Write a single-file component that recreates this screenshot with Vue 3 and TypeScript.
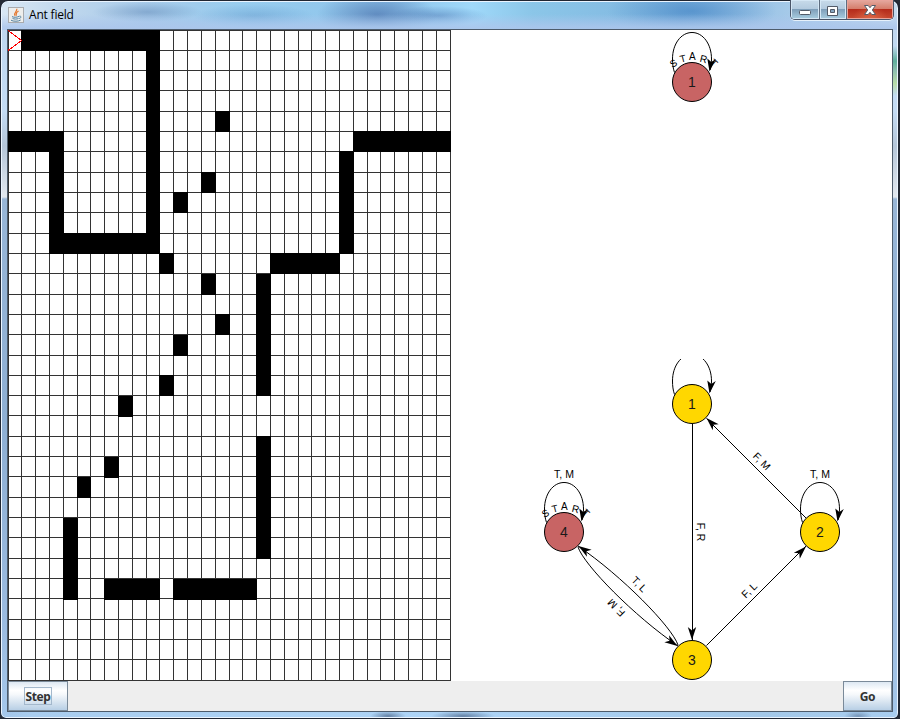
<script setup lang="ts">
interface Run { row: number; col: number; rows: number; cols: number }
interface GraphNode { id: string; x: number; y: number; start: boolean }
interface Label { text: string; x: number; y: number; angle: number }

const count = 32
const stepX = 442 / count
const stepY = 650 / count
const lineIndexes = Array.from({ length: count + 1 }, (_, i) => i)
const lineX = (i: number) => Math.floor(i * stepX)
const lineY = (i: number) => Math.floor(i * stepY)
const cellY = (i: number) => lineY(i) + (i >= 12 && (i * stepY) % 1 >= 0.4 ? 1 : 0)

const run = (row: number, col: number, rows = 1, cols = 1): Run => ({ row, col, rows, cols })
const food: Run[] = [
  run(0, 1, 1, 10), run(0, 10, 11, 1), run(10, 3, 1, 8), run(5, 0, 1, 4), run(5, 3, 6, 1),
  run(5, 25, 1, 7), run(6, 24, 5, 1), run(11, 19, 1, 5), run(12, 18, 6, 1), run(20, 18, 6, 1),
  run(27, 12, 1, 6), run(27, 7, 1, 4), run(24, 4, 4, 1),
  run(4, 15), run(7, 14), run(8, 12), run(11, 11), run(12, 14), run(14, 15),
  run(15, 12), run(17, 11), run(18, 8), run(21, 7), run(22, 5),
]
const cells = food.map((r) => ({
  x: lineX(r.col),
  y: cellY(r.row),
  w: lineX(r.col + r.cols) - lineX(r.col) + 1,
  h: cellY(r.row + r.rows - 1) + 21 - cellY(r.row),
}))

const nodes: GraphNode[] = [
  { id: '1', x: 692, y: 404, start: false },
  { id: '2', x: 820, y: 532, start: false },
  { id: '3', x: 692, y: 660, start: false },
  { id: '4', x: 564, y: 532, start: true },
]
const current: GraphNode = { id: '1', x: 692, y: 82, start: true }
const allNodes = [current, ...nodes]
const looped = allNodes.filter((n) => n.id !== '3')

const startLetters: Label[] = [
  { text: 'S', x: -18.7, y: -18.9, angle: -30 },
  { text: 'T', x: -9.3, y: -23.5, angle: -14 },
  { text: 'A', x: 0.4, y: -25.4, angle: 0 },
  { text: 'R', x: 11.6, y: -23.2, angle: 14 },
  { text: 'T', x: 22, y: -19.2, angle: 42 },
]
const labels: Label[] = [
  { text: 'T, M', x: 564, y: 474, angle: 0 },
  { text: 'T, M', x: 820, y: 474, angle: 0 },
  { text: 'F, M', x: 762, y: 461, angle: 45 },
  { text: 'F, R', x: 701, y: 532, angle: 90 },
  { text: 'F, L', x: 749, y: 590, angle: -45 },
  { text: 'T, L', x: 639.5, y: 584, angle: 45 },
  { text: 'F, M', x: 616, y: 608, angle: -135 },
]
const edges = [
  'M692.5 424V640',
  'M806 518L706.5 418.5',
  'M706.5 645.5L806 546',
  'M578 547C584 565 634 616 678 646',
  'M678 645C672 627 622 576 578 546',
]
const arrows = [
  { x: 692, y: 640, angle: 90 },
  { x: 706.5, y: 418, angle: -135 },
  { x: 806, y: 546.5, angle: -45 },
  { x: 677.5, y: 646, angle: 34 },
  { x: 578.5, y: 546, angle: -146 },
]
</script>

<template>
  <div class="window">
    <header class="title-bar">
      <div class="glass"></div>
      <svg class="app-icon" width="16" height="16" viewBox="0 0 16 16">
        <rect x=".5" y=".5" width="15" height="15" fill="#eeeeec" stroke="#a9abae" />
        <path d="M8.700 1.800C10 4 5.200 5.500 6.900 8.800M10.600 4C7.200 5.500 8.800 6.600 8 8.800" fill="none" stroke="#e5782e" stroke-width="1.200" />
        <path d="M4 9.500C5 10.500 9 10.500 11 9.400M4.500 11.300C6 12.400 9 12.200 10.500 11.500M3 13.200C5 14.700 11 14.500 12.700 13M11.300 9.200C14 8.800 13 11.300 11.200 11.500" fill="none" stroke="#5382a1" />
      </svg>
      <h1 class="title">Ant field</h1>
      <div class="controls">
        <button class="control minimize" aria-label="Minimize">
          <svg width="14" height="10" viewBox="0 0 14 10"><rect x="1.500" y="4.500" width="11" height="4" rx="1" fill="#fff" stroke="#535b68" /></svg>
        </button>
        <button class="control maximize" aria-label="Maximize">
          <svg width="14" height="10" viewBox="0 0 14 10"><path fill-rule="evenodd" d="M1.500.5h10v9h-10zM4.500 3.500h4v3h-4z" fill="#fff" stroke="#535b68" /></svg>
        </button>
        <button class="control close" aria-label="Close">
          <svg width="14" height="11" viewBox="0 0 14 11"><path d="M1.500.5h3.700L7 2.700 8.800.5h3.700L9.300 5l3.200 4.500H8.800L7 7.300 5.200 9.500H1.500L4.700 5z" fill="#fff" stroke="#535b68" /></svg>
        </button>
      </div>
    </header>

    <main class="content">
      <div class="panels">
        <svg class="field" width="443" height="651" viewBox="0 0 443 651" shape-rendering="crispEdges">
          <rect v-for="i in lineIndexes" :key="'v' + i" :x="lineX(i)" y="0" width="1" height="651" fill="#333" />
          <rect v-for="i in lineIndexes" :key="'h' + i" x="0" :y="lineY(i)" width="443" height="1" fill="#333" />
          <rect v-for="(c, i) in cells" :key="'c' + i" :x="c.x" :y="c.y" :width="c.w" :height="c.h" />
          <path d="M0 .5L13.500 10.500L0 20.500" fill="none" stroke="#f00" />
        </svg>
        <svg class="graph" width="441" height="651" viewBox="451 30 441 651">
          <defs>
            <clipPath id="machine"><rect x="451" y="359" width="441" height="322" /></clipPath>
          </defs>
          <g v-for="(n, i) in looped" :key="'l' + i" :clip-path="n.y > 359 ? 'url(#machine)' : undefined">
            <g :transform="`translate(${n.x} ${n.y})`">
              <path class="edge" d="M-17.500-9.500C-19-14-19.500-18-19.500-23C-19.500-38-11-49.500 0-49.500S19.500-38 19.500-23C19.500-19 19-16 18-12" />
              <path d="M17.500-10.500L15.300-23.500L19.300-20L23.800-23Z" />
            </g>
          </g>
          <path v-for="(d, i) in edges" :key="'e' + i" class="edge" :d="d" />
          <path v-for="(a, i) in arrows" :key="'a' + i" d="M0 0L-13-4.200L-9.500 0L-13 4.200Z" :transform="`translate(${a.x} ${a.y}) rotate(${a.angle})`" />
          <g v-for="(n, i) in allNodes" :key="'n' + i" :transform="`translate(${n.x} ${n.y})`">
            <circle r="19.500" class="node" :class="{ start: n.start }" />
            <text class="node-id" y="5">{{ n.id }}</text>
            <template v-if="n.start">
              <text v-for="(s, k) in startLetters" :key="k" class="label arc" :transform="`translate(${s.x} ${s.y}) rotate(${s.angle})`" y="3.700">{{ s.text }}</text>
            </template>
          </g>
          <text v-for="(l, i) in labels" :key="'t' + i" class="label" :transform="`translate(${l.x} ${l.y}) rotate(${l.angle})`" y="4">{{ l.text }}</text>
        </svg>
      </div>
      <footer class="toolbar">
        <button class="action step"><span class="focus">Step</span></button>
        <button class="action go">Go</button>
      </footer>
    </main>
  </div>
</template>

<style>
body {
  margin: 0;
  background: #252b36;
  overflow: hidden;
}
</style>

<style scoped>
.window {
  box-sizing: border-box;
  width: 900px;
  height: 719px;
  padding: 0 5px 5px;
  border: 2px solid #202632;
  border-width: 1px 2px 1px 1px;
  border-radius: 8px 8px 6px 6px;
  box-shadow: inset 0 0 0 1px #eaf4ff;
  background:
    linear-gradient(transparent, #5eae9c 30%, #8fc0b0 50%, #b8dca8 75%, transparent) right 1px top 45px / 5px 50px no-repeat,
    radial-gradient(ellipse 18px 5px at 387px 5px, rgba(70, 95, 130, .7), transparent) left bottom / 100% 7px no-repeat,
    radial-gradient(ellipse 32px 5px at 462px 5px, rgba(70, 95, 130, .7), transparent) left bottom / 100% 7px no-repeat,
    radial-gradient(ellipse 14px 5px at 857px 5px, rgba(70, 95, 130, .5), transparent) left bottom / 100% 7px no-repeat,
    linear-gradient(90deg, transparent 10px, #a9cdef 30px, #add4f7 50%, #a3c8e9 85%, #a9cef0) left bottom / 100% 7px no-repeat,
    linear-gradient(#bed5ed 0, #c4dcf5 110px, #b5c6d9 145px, #e2e8ef 196px, #98b6d7 198px, #8eafd3 420px, #9bbbe0 620px, #a5c8eb);
}
.title-bar {
  position: relative;
  display: flex;
  align-items: flex-start;
  height: 28px;
  padding-left: 2px;
}
.glass {
  position: absolute;
  inset: 1px -4px -1px -4px;
  border-radius: 6px 6px 0 0;
  background:
    linear-gradient(transparent 12px, rgba(172, 198, 236, .85) 25px),
    radial-gradient(ellipse 55px 10px at 145px 10px, rgba(80, 120, 170, .4), transparent),
    radial-gradient(ellipse 60px 12px at 252px 14px, rgba(67, 120, 180, .3), transparent),
    radial-gradient(ellipse 60px 24px at 375px 13px, rgba(57, 92, 156, .55), transparent),
    radial-gradient(ellipse 50px 10px at 436px 14px, rgba(64, 106, 169, .45), transparent),
    radial-gradient(ellipse 85px 24px at 690px 9px, rgba(48, 116, 188, .5), transparent),
    linear-gradient(90deg, #d9e7f4, #bfd7ed 65px, #a8cbea 145px, #98cdef 240px, #8dc3ea 390px, #a0d9fa 470px, #8bc6e8 530px, #80b5df 680px, #a6cae9 790px, #c5dbef);
}
.app-icon {
  position: relative;
  margin-top: 6px;
}
.title {
  position: relative;
  margin: 5px 0 0 5px;
  font: 400 12px/18px "Open Sans", "Noto Sans", sans-serif;
  letter-spacing: -.2px;
  color: #000;
}
.controls {
  position: relative;
  display: flex;
  box-sizing: border-box;
  width: 104px;
  height: 20px;
  margin: -1px -1px 0 auto;
  border: 1px solid #4a5568;
  border-top: 0;
  border-radius: 0 0 5px 5px;
  overflow: hidden;
  box-shadow: 0 1px 0 #e6f1fb;
}
.control {
  display: flex;
  justify-content: center;
  align-items: center;
  box-sizing: border-box;
  width: 29px;
  padding: 2px 0 0;
  border: 0;
  border-right: 1px solid #5e6d80;
  background: linear-gradient(#c8dbea, #b4cbdf 46%, #7f9fba 50%, #a9cee1);
  box-shadow: inset 0 0 0 1px #d5e7f5;
}
.maximize {
  width: 27px;
}
.close {
  width: 46px;
  border-right: 0;
  background: radial-gradient(ellipse at 50% 110%, rgba(240, 130, 90, .6), transparent 55%), linear-gradient(#e5aaa0, #d57d6b 46%, #b52c1b 50%, #c74a31);
  box-shadow: inset 0 0 0 1px #e8a49b;
}
.content {
  position: relative;
  width: 884px;
  height: 681px;
  margin-left: 1px;
  border: 1px solid #4d5b6b;
  background: #fff;
}
.panels {
  display: flex;
}
.field,
.graph {
  display: block;
}
.edge {
  fill: none;
  stroke: #000;
}
.node {
  fill: #ffd700;
  stroke: #000;
}
.node.start {
  fill: #c86464;
}
.node-id,
.label {
  font-family: "Liberation Sans", Arial, sans-serif;
  text-anchor: middle;
}
.node-id {
  font-size: 14px;
  fill: #1a1a1a;
}
.label {
  font-size: 10.5px;
}
.arc {
  font-size: 10px;
}
.toolbar {
  display: flex;
  justify-content: space-between;
  height: 30px;
  background: #eee;
}
.action {
  display: flex;
  align-items: center;
  justify-content: center;
  box-sizing: border-box;
  height: 30px;
  padding: 1px 0 0;
  border: 1px solid #7a8a99;
  background: linear-gradient(#dde8f3, #fff 30%, #f5f8fb 45%, #b8cfe5);
  font: 700 12px/17px "Noto Sans", "Open Sans", sans-serif;
  letter-spacing: -.4px;
  color: #333;
}
.step {
  width: 60px;
  padding: 0;
}
.go {
  width: 49px;
}
.focus {
  box-sizing: border-box;
  width: 28px;
  height: 18px;
  border: 1px solid #a3b8cc;
  text-align: center;
}
</style>
